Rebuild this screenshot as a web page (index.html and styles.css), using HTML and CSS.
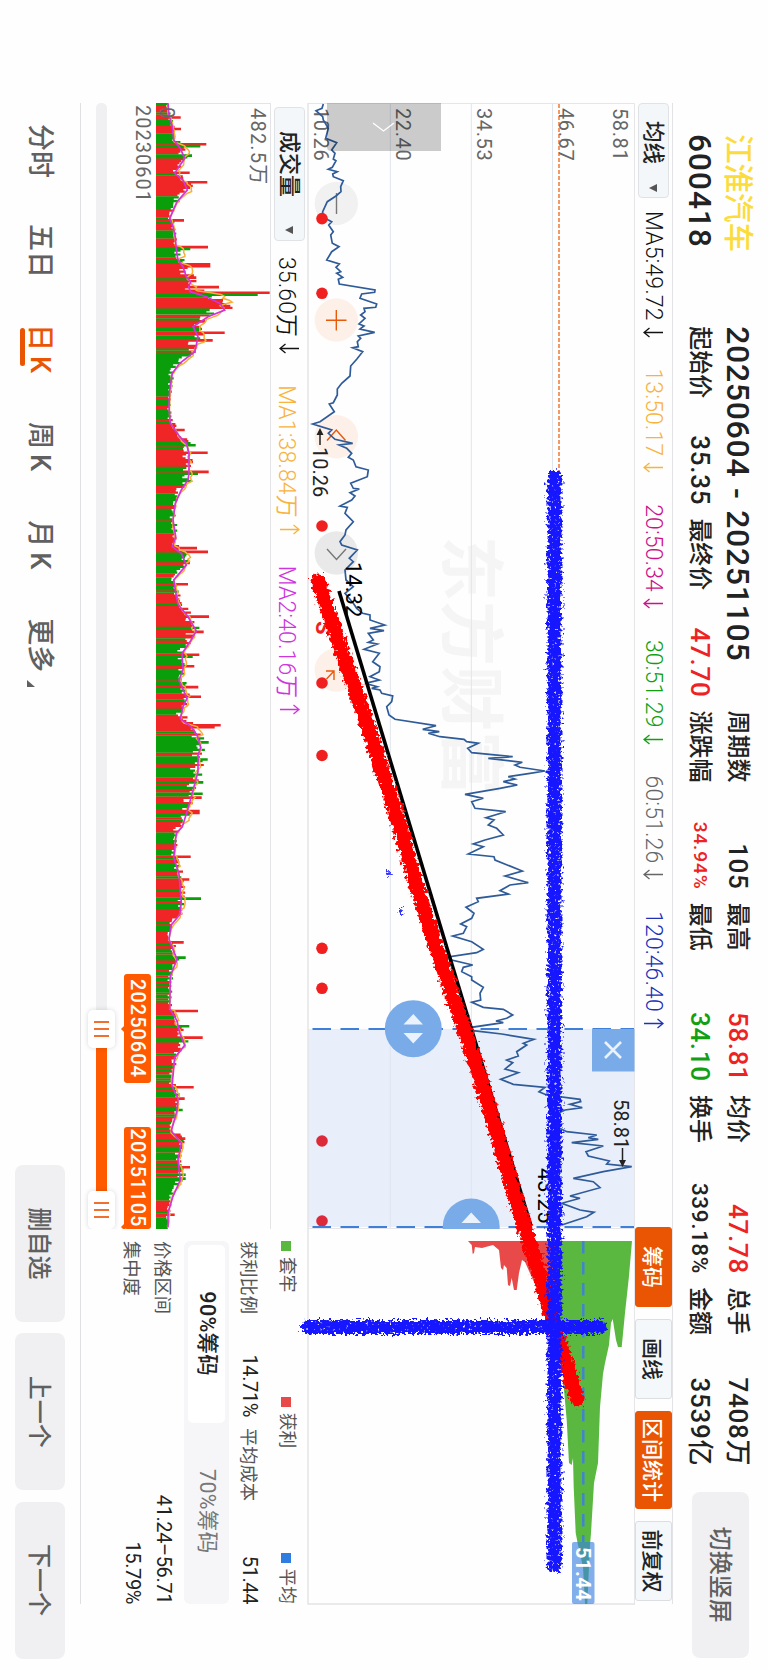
FILE: index.html
```html
<!DOCTYPE html>
<html lang="zh-CN">
<head>
    <meta charset="UTF-8">
    <meta name="viewport" content="width=device-width, initial-scale=1.0">
    <title>江淮汽车 600418</title>
    <link rel="stylesheet" href="styles.css">
</head>
<body>
    <svg width="0" height="0" class="defs">
        <symbol id="down" viewBox="0 0 11 21"><path d="M5.5 1V20M1 14.5L5.5 20L10 14.5" fill="none" stroke="currentColor" stroke-width="1.3"/></symbol>
        <symbol id="up" viewBox="0 0 11 21"><path d="M5.5 20V1M1 6.5L5.5 1L10 6.5" fill="none" stroke="currentColor" stroke-width="1.3"/></symbol>
    </svg>

    <!-- Landscape screen, turned clockwise -->
    <div class="screen">
        <header class="header">
            <div class="stats">
                <div class="name">江淮汽车</div>
                <div class="range">20250604 - 20251105</div>
                <div class="cell"><span>周期数</span><b>105</b></div>
                <div class="cell"><span>最高</span><b class="red">58.81</b></div>
                <div class="cell"><span>均价</span><b class="red">47.78</b></div>
                <div class="cell"><span>总手</span><b>7408万</b></div>
                <div class="code">600418</div>
                <div class="cell"><span>起始价</span><b>35.35</b></div>
                <div class="cell"><span>最终价</span><b class="red">47.70</b></div>
                <div class="cell"><span>涨跌幅</span><b class="red small">34.94%</b></div>
                <div class="cell"><span>最低</span><b class="green">34.10</b></div>
                <div class="cell"><span>换手</span><b class="medium">339.18%</b></div>
                <div class="cell"><span>金额</span><b>3539亿</b></div>
            </div>
            <button class="grey-btn switch">切换竖屏</button>
        </header>

        <div class="toolbar">
            <button class="select">均线<i class="caret"></i></button>
            <div class="indicators">
                <span class="ma5">MA5:49.72<svg><use href="#down"/></svg></span>
                <span class="ma13">13:50.17<svg><use href="#down"/></svg></span>
                <span class="ma20">20:50.34<svg><use href="#down"/></svg></span>
                <span class="ma30">30:51.29<svg><use href="#down"/></svg></span>
                <span class="ma60">60:51.26<svg><use href="#down"/></svg></span>
                <span class="ma120">120:46.40<svg><use href="#up"/></svg></span>
            </div>
            <div class="tools">
                <button class="tool active">筹码</button>
                <button class="tool">画线</button>
                <button class="tool wide active">区间统计</button>
                <button class="tool">前复权</button>
            </div>
        </div>

        <svg class="chart" viewBox="103 133 1501 327">
            <defs>
                <filter id="spray" filterUnits="userSpaceOnUse" x="440" y="140" width="1160" height="340">
                    <feTurbulence type="fractalNoise" baseFrequency="0.35" numOctaves="2" seed="4" result="n"/>
                    <feDisplacementMap in="SourceGraphic" in2="n" scale="11" xChannelSelector="R" yChannelSelector="G" result="d"/>
                    <feColorMatrix in="n" type="matrix" values="0 0 0 0 0  0 0 0 0 0  0 0 0 0 0  0 0 -6 0 5" result="m"/>
                    <feComposite in="d" in2="m" operator="in"/>
                </filter>
                <filter id="rough" filterUnits="userSpaceOnUse" x="440" y="140" width="1160" height="340">
                    <feTurbulence type="fractalNoise" baseFrequency="0.3" numOctaves="2" seed="9" result="n"/>
                    <feDisplacementMap in="SourceGraphic" in2="n" scale="10" xChannelSelector="R" yChannelSelector="G"/>
                </filter>
                <clipPath id="plot"><rect x="103" y="133" width="1126" height="328"/></clipPath>
            </defs>

            <rect x="1029" y="134" width="198" height="326" fill="#e8effb"/>
            <g font-size="65" font-weight="700" fill="#f5f5f5"><text x="536" y="320">东方财富</text></g>
            <g stroke="#dfe5ee">
                <path d="M103 215.5H1228M103 296.7H1228M103 377.7H1228"/>
            </g>
            <path d="M103.5 460V133.5H1604M1228.5 133V460" fill="none" stroke="#e6e6e8"/>
            <path d="M103 460H1604V133" fill="none" stroke="#e3e3e6" stroke-width="1.4"/>
            <path d="M104 209H480" stroke="#f08040" stroke-width="1.6" stroke-dasharray="4 2"/>

            <!-- Floating zoom / pan controls -->
            <g fill="none" stroke-width="1.4">
                <g fill="#f1f1f1" stroke="none"><circle cx="203.5" cy="431.7" r="21.7"/><circle cx="553" cy="431.7" r="21.7" fill="#e9e9e9"/></g>
                <g fill="#fdf0e8" stroke="none"><circle cx="320" cy="431.7" r="21.7"/><circle cx="436.7" cy="431.7" r="21.7"/><circle cx="670" cy="431.7" r="21.7"/></g>
                <path d="M193 431.5H214M549 441L559.5 431.5L549 422" stroke="#777"/>
                <path d="M310 431.7H330.5M320.2 421.5V442M440.5 441L430 431.7L440.5 422.5M680 434H671V442M671 434L679 441.5M662 426V430" stroke="#e8590c"/>
            </g>

            <g class="axis">
                <text x="108" y="155">58.81</text>
                <text x="108" y="209">46.67</text>
                <text x="108" y="291">34.53</text>
                <text x="108" y="372.5">22.40</text>
                <text x="108" y="454">10.26</text>
            </g>

            <path id="price" fill="none" stroke="#2f5b99" stroke-width="1.7"/>

            <path d="M103 327V441H147Q151 441 151 437V327Z" fill="#000" opacity=".2"/>
            <path d="M123 395L131 384.5L123 374" fill="none" stroke="#fff" stroke-width="1.3"/>

            <g fill="#f02020">
                <circle cx="218.6" cy="446" r="5.8"/><circle cx="293.3" cy="446" r="5.8"/>
                <circle cx="526" cy="446" r="5.8"/><circle cx="683" cy="446" r="5.8"/>
                <circle cx="755.5" cy="446" r="5.8"/><circle cx="948.3" cy="446" r="5.8"/>
                <circle cx="988.3" cy="446" r="5.8"/>
                <circle cx="1141" cy="446" r="5.8" fill="#dc2a3a"/><circle cx="1221" cy="446" r="5.8" fill="#dc2a3a"/>
                <text x="621" y="452.5" font-size="22" font-weight="700">S</text>
            </g>

            <g class="mark">
                <text x="447" y="455">10.26</text>
                <text x="1099" y="154">58.81</text>
                <path d="M445 448H432M1148 145.5H1163" stroke="#222" stroke-width="1.5"/>
                <path d="M428 448L435 444.5V451.5ZM1167 145.5L1160 142V149Z"/>
            </g>

            <!-- Selected interval -->
            <g clip-path="url(#plot)">
                <path d="M1029 134V460M1227 134V460" stroke="#3d7fd9" stroke-width="2" stroke-dasharray="18.5 9.5" stroke-dashoffset="5"/>
                <g fill="#79abe9">
                    <rect x="1029" y="133.5" width="42.5" height="42.5"/>
                    <circle cx="1028.7" cy="354.7" r="28.5"/>
                    <circle cx="1227" cy="296.8" r="28.5"/>
                </g>
                <g fill="#eaf2fd">
                    <path d="M1024.5 345V364.5L1014 354.7ZM1033 345V364.5L1043.5 354.7ZM1223 287V306.5L1212.5 296.8Z"/>
                </g>
                <path d="M1042 147L1058 163M1058 147L1042 163" stroke="#eaf2fd" stroke-width="2.6"/>
            </g>

            <!-- Cost distribution -->
            <path id="chipsGreen" fill="#5ab841"/>
            <path id="chipsRed" fill="#e84a4a"/>
            <path d="M1241 184.7H1542" stroke="#3f82d8" stroke-width="2.4" stroke-dasharray="12.5 8.5"/>
            <rect x="1542" y="173.5" width="62" height="22.5" rx="2" fill="#3c82e0" opacity=".64"/>
            <text x="1547" y="192" class="avg">51.44</text>

            <!-- Hand drawn marks -->
            <path d="M591 429L1226 237" stroke="#000" stroke-width="3.6"/>
            <g class="note"><text x="562" y="422">14.32</text><text x="1168" y="230">43.25</text></g>
            <path filter="url(#rough)" d="M581 450L610 440L660 423L740 395.5L813 372L880 353L937 335L1003 313L1070 290L1137 270L1203 251L1270 230L1313 218L1367 201L1399 191" fill="none" stroke="#ff0000" stroke-width="15" stroke-linecap="round" stroke-linejoin="round"/>
            <g filter="url(#spray)" fill="none" stroke-linecap="round">
                <path d="M477 213.5H1566M1327 460V168" stroke="#1414ff" stroke-width="14"/>
                <path d="M872 380L875 379M910 368L912 367" stroke="#3030ff" stroke-width="4"/>
            </g>
        </svg>

        <div class="lower">
            <div class="volume">
                <div class="volume-bar">
                    <button class="select">成交量<i class="caret"></i></button>
                    <div class="indicators">
                        <span class="vol">35.60万<svg><use href="#down"/></svg></span>
                        <span class="ma13">MA1:38.84万<svg><use href="#up"/></svg></span>
                        <span class="purple">MA2:40.16万<svg><use href="#up"/></svg></span>
                    </div>
                </div>
                <svg class="volume-chart" viewBox="103 497 1126 115">
                    <path d="M103 497.5H1229M103.5 497V612" fill="none" stroke="#e4e4e6"/>
                    <path id="volRed" stroke="#f02525" stroke-width="2.2"/>
                    <path id="volGreen" stroke="#0a9f0a" stroke-width="2.2"/>
                    <path id="volMa1" fill="none" stroke="#f9ae38" stroke-width="1.5"/>
                    <path id="volMa2" fill="none" stroke="#cf35dc" stroke-width="1.7"/>
                    <g class="axis volume-axis"><text x="108" y="517">482.5万</text><text x="107" y="608">0</text></g>
                </svg>
                <div class="dates">
                    <span class="start">20230601</span>
                    <span class="tag from">20250604</span>
                    <span class="tag to">20251105</span>
                </div>
                <div class="slider">
                    <div class="track"></div>
                    <div class="fill"></div>
                    <div class="handle left"><i></i><i></i><i></i></div>
                    <div class="handle right"><i></i><i></i><i></i></div>
                </div>
            </div>

            <aside class="chips">
                <div class="legend">
                    <span><i class="sq-green"></i>套牢</span>
                    <span><i class="sq-red"></i>获利</span>
                    <span><i class="sq-blue"></i>平均</span>
                </div>
                <div class="row two">
                    <p><span>获利比例</span><b>14.71%</b></p>
                    <p><span>平均成本</span><b>51.44</b></p>
                </div>
                <div class="segment">
                    <span class="on">90%筹码</span>
                    <span>70%筹码</span>
                </div>
                <div class="row"><span>价格区间</span><b>41.24–56.71</b></div>
                <div class="row last"><span>集中度</span><b>15.79%</b></div>
            </aside>
        </div>

        <footer class="footer">
            <nav class="tabs">
                <a>分时</a>
                <a>五日</a>
                <a class="current">日<span class="k">K</span></a>
                <a>周<span class="k">K</span></a>
                <a>月<span class="k">K</span></a>
                <a class="more">更多</a>
            </nav>
            <div class="actions">
                <button class="grey-btn">删自选</button>
                <button class="grey-btn">上一个</button>
                <button class="grey-btn">下一个</button>
            </div>
        </footer>
    </div>

    <script src="chart.js"></script>
</body>
</html>
```

FILE: styles.css
```css
/* Basic Reset */
* {
    box-sizing: border-box;
}

html {
    overflow: hidden;
}

body {
    margin: 0;
    width: 768px;
    height: 1670px;
    overflow: hidden;
    background-color: #fefefe;
    font-family: Roboto, "Noto Sans CJK SC", sans-serif;
    color: #222;
}

.defs {
    display: block;
}

button {
    font-family: inherit;
    border: none;
    padding: 0;
}

p {
    margin: 0;
}

/* Landscape screen */
.screen {
    width: 1670px;
    height: 768px;
    transform-origin: 0 0;
    transform: translateX(768px) rotate(90deg);
    display: flex;
    flex-direction: column;
    white-space: nowrap;
}

/* Header */
.header {
    flex: none;
    height: 95px;
    display: flex;
    padding: 11px 0 0 134px;
}

.stats {
    display: grid;
    grid-template-columns: repeat(7, 192.2px);
    grid-template-rows: 38px 38px;
    align-items: center;
}

.name {
    color: #fbdc3c;
    font-size: 29.5px;
    font-weight: 500;
    line-height: 38px;
}

.code {
    font-size: 31.5px;
    font-weight: 500;
    letter-spacing: 1.1px;
}

.range {
    grid-column: span 2;
    font-size: 32px;
    font-weight: 500;
    letter-spacing: 0.7px;
    word-spacing: 2px;
}

.cell {
    display: flex;
    justify-content: space-between;
    align-items: center;
    width: 179px;
    height: 38px;
    font-size: 24px;
    font-weight: 500;
    line-height: 38px;
}

.cell b {
    font-size: 26px;
    font-weight: 500;
    letter-spacing: 0.7px;
}

.cell .small {
    font-size: 19px;
    letter-spacing: 0.9px;
}

.cell .medium {
    font-size: 22.5px;
    letter-spacing: 0.6px;
}

.cell .red {
    color: #ee2222;
}

.cell .green {
    color: #12a012;
}

.grey-btn {
    width: 157px;
    height: 50px;
    padding-bottom: 4px;
    border-radius: 8px;
    background-color: #f0f0f3;
    color: #606060;
    font-size: 24px;
    font-weight: 500;
}

.switch {
    width: 166px;
    height: 57px;
    margin: 8px 0 0 12.5px;
}

/* Moving average bar */
.toolbar {
    flex: none;
    height: 38px;
    width: 1501px;
    margin-left: 103px;
    border-top: 1px solid #e3e3e6;
    display: flex;
    align-items: center;
}

.select {
    width: 95px;
    height: 31px;
    display: flex;
    align-items: center;
    justify-content: space-between;
    padding: 0 5px 0 17px;
    border: 1px solid #e0e3e6;
    border-radius: 4px;
    background-color: #f3f7f9;
    color: #222;
    font-size: 21.5px;
    font-weight: 500;
    line-height: 1;
}

.caret {
    border: 4.5px solid transparent;
    border-top: 8px solid #555;
    border-bottom: none;
}

.indicators {
    display: flex;
    gap: 31px;
    margin-left: 13px;
    font-size: 23px;
    font-weight: 350;
    letter-spacing: 0.1px;
}

.indicators span {
    display: flex;
    align-items: center;
}

.indicators svg {
    width: 11px;
    height: 21px;
    margin-left: 6px;
}

.ma5, .vol {
    color: #111;
}

.ma13 {
    color: #f8b33f;
}

.ma20 {
    color: #cc1288;
}

.ma30 {
    color: #11a011;
}

.ma60 {
    color: #666;
}

.ma120 {
    color: #2030b8;
}

.tools {
    display: flex;
    gap: 12px;
    margin: 0 3px 0 auto;
}

.tool {
    width: 80px;
    height: 37px;
    padding-bottom: 2px;
    border: 1px solid #dcdfe2;
    border-radius: 3px;
    background-color: #f4f8fa;
    color: #222;
    font-size: 21px;
    font-weight: 500;
}

.tool.wide {
    width: 98px;
}

.tool.active {
    border-color: #ea5504;
    background-color: #ea5504;
    color: #fff;
}

/* Price chart */
.chart {
    flex: none;
    display: block;
    width: 1501px;
    height: 327px;
    margin-left: 103px;
    overflow: visible;
    position: relative;
    z-index: 1;
}

.axis {
    fill: #666;
    font-size: 20px;
    letter-spacing: 0.6px;
}

.volume-axis {
    letter-spacing: 1.2px;
}

.mark {
    fill: #222;
    font-size: 20px;
}

.note {
    fill: #000;
    font-size: 22px;
}

.avg {
    fill: #fff;
    font-size: 20px;
    font-weight: 700;
    letter-spacing: 0.5px;
}

/* Volume area */
.lower {
    flex: none;
    display: flex;
    height: 227px;
    width: 1501px;
    margin-left: 103px;
}

.volume {
    width: 1126px;
    overflow: hidden;
}

.volume-bar {
    display: flex;
    align-items: center;
    height: 37px;
    padding-left: 4px;
}

.volume-bar .select {
    width: 134px;
    padding: 0 6px 0 23px;
    font-size: 22px;
}

.volume-bar .indicators {
    margin-left: 16px;
}

.purple {
    color: #cf35dc;
}

.volume-chart {
    display: block;
    width: 1126px;
    height: 115px;
    overflow: visible;
}

.dates {
    position: relative;
    height: 41px;
    padding: 1px 0 0 2px;
    color: #666;
    font-size: 20px;
    letter-spacing: 1px;
}

.tag {
    position: absolute;
    top: 5px;
    width: 109px;
    height: 27px;
    border-radius: 3px;
    background-color: #ff5a00;
    color: #fff;
    font-weight: 500;
    letter-spacing: 1px;
    line-height: 27px;
    text-align: center;
}

.tag::after {
    content: "";
    position: absolute;
    left: 51px;
    top: 26px;
    border: 4px solid transparent;
    border-top-color: #ff5a00;
    border-bottom: none;
}

.from {
    left: 871px;
}

.to {
    left: 1024px;
    width: 102px;
}

.to::after {
    left: 96px;
}

.slider {
    position: relative;
    height: 34px;
    padding-top: 8px;
}

.track {
    height: 11px;
    border-radius: 5px;
    background-color: #f0f0f3;
}

.fill {
    position: absolute;
    left: 930px;
    top: 8px;
    width: 170px;
    height: 11px;
    background-color: #ff5a00;
}

.handle {
    position: absolute;
    top: 0;
    width: 38px;
    height: 27px;
    display: flex;
    justify-content: center;
    align-items: center;
    gap: 5px;
    border-radius: 5px;
    background-color: #fff;
    box-shadow: 0 0 5px rgba(0, 0, 0, 0.15);
}

.handle i {
    width: 2px;
    height: 15px;
    background-color: #f07030;
}

.left {
    left: 907px;
}

.right {
    left: 1088px;
}

/* Chip panel */
.chips {
    width: 363px;
    margin-left: 12px;
    color: #555;
    font-size: 18.3px;
}

.chips b {
    color: #222;
    font-size: 20px;
    font-weight: 400;
    letter-spacing: -0.4px;
}

.legend {
    display: flex;
    justify-content: space-between;
    height: 42px;
    line-height: 42px;
    font-size: 17.7px;
}

.legend i {
    display: inline-block;
    width: 10px;
    height: 10px;
    margin-right: 6px;
}

.sq-green {
    background-color: #5ab841;
}

.sq-red {
    background-color: #e84a4a;
}

.sq-blue {
    background-color: #2f7de0;
}

.row {
    display: flex;
    justify-content: space-between;
    align-items: center;
    height: 31px;
}

.two {
    height: 32px;
    margin-bottom: 5px;
}

.two p {
    display: flex;
    justify-content: space-between;
    align-items: center;
    width: 176px;
}

.segment {
    display: flex;
    height: 45px;
    padding: 4px;
    border-radius: 6px;
    background-color: #f6f6f9;
    color: #777;
    font-size: 21.5px;
    line-height: 36px;
    text-align: center;
    margin-bottom: 4px;
}

.segment span {
    flex: 1;
    letter-spacing: 0.3px;
}

.segment .on {
    border-radius: 5px;
    background-color: #fff;
    color: #222;
    font-weight: 500;
}

/* Footer */
.footer {
    flex: none;
    display: flex;
    justify-content: space-between;
    height: 81px;
    width: 1501px;
    margin-left: 103px;
    border-top: 1px solid #e0e0e2;
}

.tabs {
    display: flex;
    gap: 46px;
    padding: 21px 0 0 21px;
    font-size: 27px;
    font-weight: 500;
    line-height: 38px;
    color: #606060;
}

.k {
    margin: 0 3px 0 5px;
}

.current {
    color: #ea5504;
}

.current::after {
    content: "";
    display: block;
    width: 38px;
    height: 5px;
    margin: -4px 0 0 4px;
    border-radius: 3px;
    background-color: #ea5504;
}

.more::after {
    content: "";
    display: inline-block;
    margin-left: 8px;
    border-left: 7px solid transparent;
    border-bottom: 8px solid #606060;
    vertical-align: -4px;
}

.actions {
    display: flex;
    gap: 11.3px;
    margin: 15px -54.5px 0 0;
}
```

FILE: chart.js
```js
// Each trace: time origin, then "value,time" pairs
const priceParts = [
    [90, '100,42 96,55 78,62 98,80 100,90 115,115 107,145 140,158 125,180 135,190 130,207 138,212 127,232 115,238 142,245 128,252 130,260 160,272 152,290 153,305 138,318 112,335 105,350 98,365 98,380 115,390 125,395 116,405 130,425 122,435 127,460 147,470 125,485 110,510 148,522 138,532 152,545 140,550 158,562 145,568 148,582 255,600 254,607 215,612 210,625 260,642 257,652 222,655 225,665 212,675 225,685 207,702 222,708 210,717 254,727 205,738 212,745 202,755 205,770 188,773 218,785 200,808 182,828 180,858 155,880 142,897 142,915 130,938 118,942 133,965 90,995 68,1002 125,1020 115,1030 135,1048 188,1060 147,1065 170,1075 185,1090 175,1102 190,1110 198,1130 235,1140 232,1160 182,1180 190,1195'],
    [480, '208,27 180,38 195,48 185,60 150,78 172,82 165,100 180,115 190,125 168,150 165,165 150,185 155,195 202,210 178,235 190,245 165,270 168,300 190,320 165,340 190,370 200,385 218,400 240,405 240,420 284,435 240,445 282,452 235,460 250,480 235,487 262,492 222,508 268,520 248,545 270,560 268,575 240,590 268,600 225,610 262,620 245,625 270,630 275,640 308,648 305,665 290,680 297,705 315,718 438,737 398,748 448,755 415,760 450,770 522,778 530,785 565,790 533,805 545,818 668,830 595,835 697,847 675,855 690,862 765,873 720,880 655,890 675,897 640,905 682,915 630,925 525,943 580,955 545,965 555,985 647,995 588,1013 612,1020 595,1035 620,1045 640,1065 585,1080 550,1092 580,1100 535,1122 612,1130 615,1140 697,1173'],
    [870, '645,18 715,38 660,45 630,62 655,72 560,85 565,95 528,112 552,130 545,145 512,162 530,170 520,190 488,198 545,215 580,238 560,248 480,260 485,270 548,285 520,292 515,305 545,320 545,330 580,352 570,370 572,390 545,397 580,412 640,418 668,435 650,445 618,453 640,458 545,472 550,482 635,492 732,508 700,520 710,525 680,545 685,558 650,570 668,578 645,597 685,608 632,628 670,643 765,652 747,665 770,675 870,688 872,695 840,703 877,713 825,720 805,730 800,770 830,785 920,795 895,803 925,808 845,818 940,828 888,845 895,858 958,873 950,882 1025,890 940,905 850,925 910,935 930,953 840,978 870,985 815,1000 870,1020 912,1027 890,1040 815,1065']
];

function points(list) {
    return list.split(' ').map(p => p.split(',').map(Number));
}

let price = [];
priceParts.forEach(([x0, list]) => {
    points(list).forEach(([v, t]) => price.push((x0 + t / 3).toFixed(1) + ' ' + (478 - v / 3).toFixed(1)));
});
document.getElementById('price').setAttribute('d', 'M' + price.join('L'));

// Cost distribution outlines: price level, amount
const green = '632,1241 629,1276 625,1313 621.7,1347 618,1347 616,1340 612.7,1319 611,1323 609,1345 605,1363 603,1374 600,1407 598,1463 594,1483 591,1533 590,1545 587.3,1604 585,1604 583,1567 578,1545 575.7,1533 573.7,1487 573,1458 571.7,1465 569,1463 566.7,1420 564,1390 561.7,1333 557,1320 557,1241';
const red = '557,1241 557,1335 550,1317 543,1300 533,1280 525,1262 522,1260 519,1273 516.7,1290 514,1290 511.7,1278 510,1286 508,1285 506.7,1268 504,1265 503,1270 501,1268 499,1250 493,1245 482,1248 475,1247 474,1253 472.7,1254 471.7,1245 468,1241';

function outline(id, list) {
    const d = points(list).map(([level, amount]) => amount + ' ' + (768 - level)).join('L');
    document.getElementById(id).setAttribute('d', 'M' + d + 'Z');
}
outline('chipsGreen', green);
outline('chipsRed', red);

// Volume average, then the bars that stand out: x, height
const avgPoints = [];
points('40,145 75,148 110,158 150,162 175,182 205,195 230,178 250,165 270,190 300,203 335,172 385,150 410,160 440,167 480,170 510,175 530,190 560,200 575,213 590,207 605,212 620,260 640,300 660,315 680,265 710,220 740,235 765,230 785,225 820,180 850,158 900,150 950,148 1000,152 1040,180 1060,200 1090,208 1120,208 1150,208 1170,205 1200,185 1240,167 1290,160 1340,168 1370,158 1390,185 1425,200 1470,162').forEach(([t, v]) => avgPoints.push([90 + t / 3, (v - 109) / 3]));
points('30,168 60,175 90,205 125,230 150,212 180,187 220,190 245,178 290,202 310,190 340,182 360,215 380,232 410,243 430,235 470,235 500,225 560,205 605,188 620,170 680,162 720,178 790,185 820,180 845,155 880,148 905,160 930,172 970,152 1050,150 1080,172 1110,180 1140,195 1170,165 1240,157 1270,175 1300,172 1350,155 1380,185 1420,175 1470,182 1510,160 1550,145 1586,145').forEach(([t, v]) => avgPoints.push([580 + t / 2.45, (v - 109) / 3]));

const spikes = [];
'82,183r 117,184r 162,260r 168,242g 197,217g 248,210r 278,263r 392,193r 472,265r 478,212g 523,272r 529,272r 563,230r 592,298r 610,450r 616,414g 630,310r 640,320r 645,332r 657,270g 695,256r 730,315r 753,279r 783,228r 1020,195r 1067,228g 1090,264r 1143,267r 1150,235g 1376,232r 1383,265r 1480,206r'.split(' ').forEach(s => {
    const [t, v] = s.split(',');
    spikes.push([90 + t / 3, (parseInt(v) - 109) / 3, s.slice(-1)]);
});
'10,205r 88,268r 125,252r 181,239r 187,219g 210,224r 262,236r 285,244r 355,303r 361,285r 395,267g 438,264g 495,251g 523,249g 533,246r 567,240r 572,240r 678,213r 733,209r 780,244g 888,192r 926,198g 1057,235r 1095,209g 1123,249r 1244,222r 1272,195r 1300,189g 1366,197r 1440,211r 1455,198g 1468,198g 1553,165r'.split(' ').forEach(s => {
    const [t, v] = s.split(',');
    spikes.push([580 + t / 2.45, (parseInt(v) - 109) / 3, s.slice(-1)]);
});

function average(x) {
    for (let i = 1; i < avgPoints.length; i++) {
        const [x1, y1] = avgPoints[i - 1];
        const [x2, y2] = avgPoints[i];
        if (x <= x2) return y1 + (y2 - y1) * Math.max(0, x - x1) / (x2 - x1);
    }
    return avgPoints[avgPoints.length - 1][1];
}

let seed = 11;
function random() {
    seed = (seed * 16807) % 2147483647;
    return seed / 2147483647;
}

const step = 1.905;
const bars = [];
let color = 'r';
for (let x = 104; x < 1229; x += step) {
    if (random() < 0.38) color = color === 'r' ? 'g' : 'r';
    bars.push({ x: x, h: average(x + 3) * (0.8 + random() * 0.4), c: color, w: 0 });
}
// Quiet stretches where most days closed lower
[[128, 136], [196, 204], [352, 385], [388, 396], [470, 484], [554, 562], [686, 694], [832, 842], [1184, 1200], [1218, 1229]].forEach(([a, b]) => {
    bars.forEach(bar => {
        if (bar.x > a && bar.x < b) bar.c = 'g';
    });
});
// Rallies
[[126, 133], [178, 186], [240, 250], [280, 292], [298, 308], [425, 440], [548, 553], [606, 620], [720, 732], [1002, 1012], [1024, 1034]].forEach(([a, b]) => {
    bars.forEach(bar => {
        if (bar.x > a && bar.x < b) bar.c = 'r';
    });
});
spikes.forEach(([x, h, c]) => {
    const bar = bars[Math.min(bars.length - 1, Math.round((x - 104) / step))];
    bar.h = h;
    bar.c = c;
    bar.w = 0.4;
});

const paths = { r: '', g: '' };
bars.forEach(bar => {
    const x = bar.x;
    const top = (612 - bar.h).toFixed(1);
    paths[bar.c] += `M${x.toFixed(1)} 612V${top}`;
    if (bar.w) paths[bar.c] += `M${(x + bar.w).toFixed(1)} 612V${top}`;
});
document.getElementById('volRed').setAttribute('d', paths.r);
document.getElementById('volGreen').setAttribute('d', paths.g);

// Short average follows the bars, long average is the smooth one
let ma1 = [];
bars.forEach((bar, i) => {
    const part = bars.slice(Math.max(0, i - 5), i + 1);
    const mean = part.reduce((sum, b) => sum + b.h, 0) / part.length;
    ma1.push(bar.x.toFixed(1) + ' ' + (612 - mean).toFixed(1));
});
document.getElementById('volMa1').setAttribute('d', 'M' + ma1.join('L'));
document.getElementById('volMa2').setAttribute('d', 'M' + avgPoints.map(([x, h]) => x.toFixed(1) + ' ' + (612 - h).toFixed(1)).join('L'));
```
